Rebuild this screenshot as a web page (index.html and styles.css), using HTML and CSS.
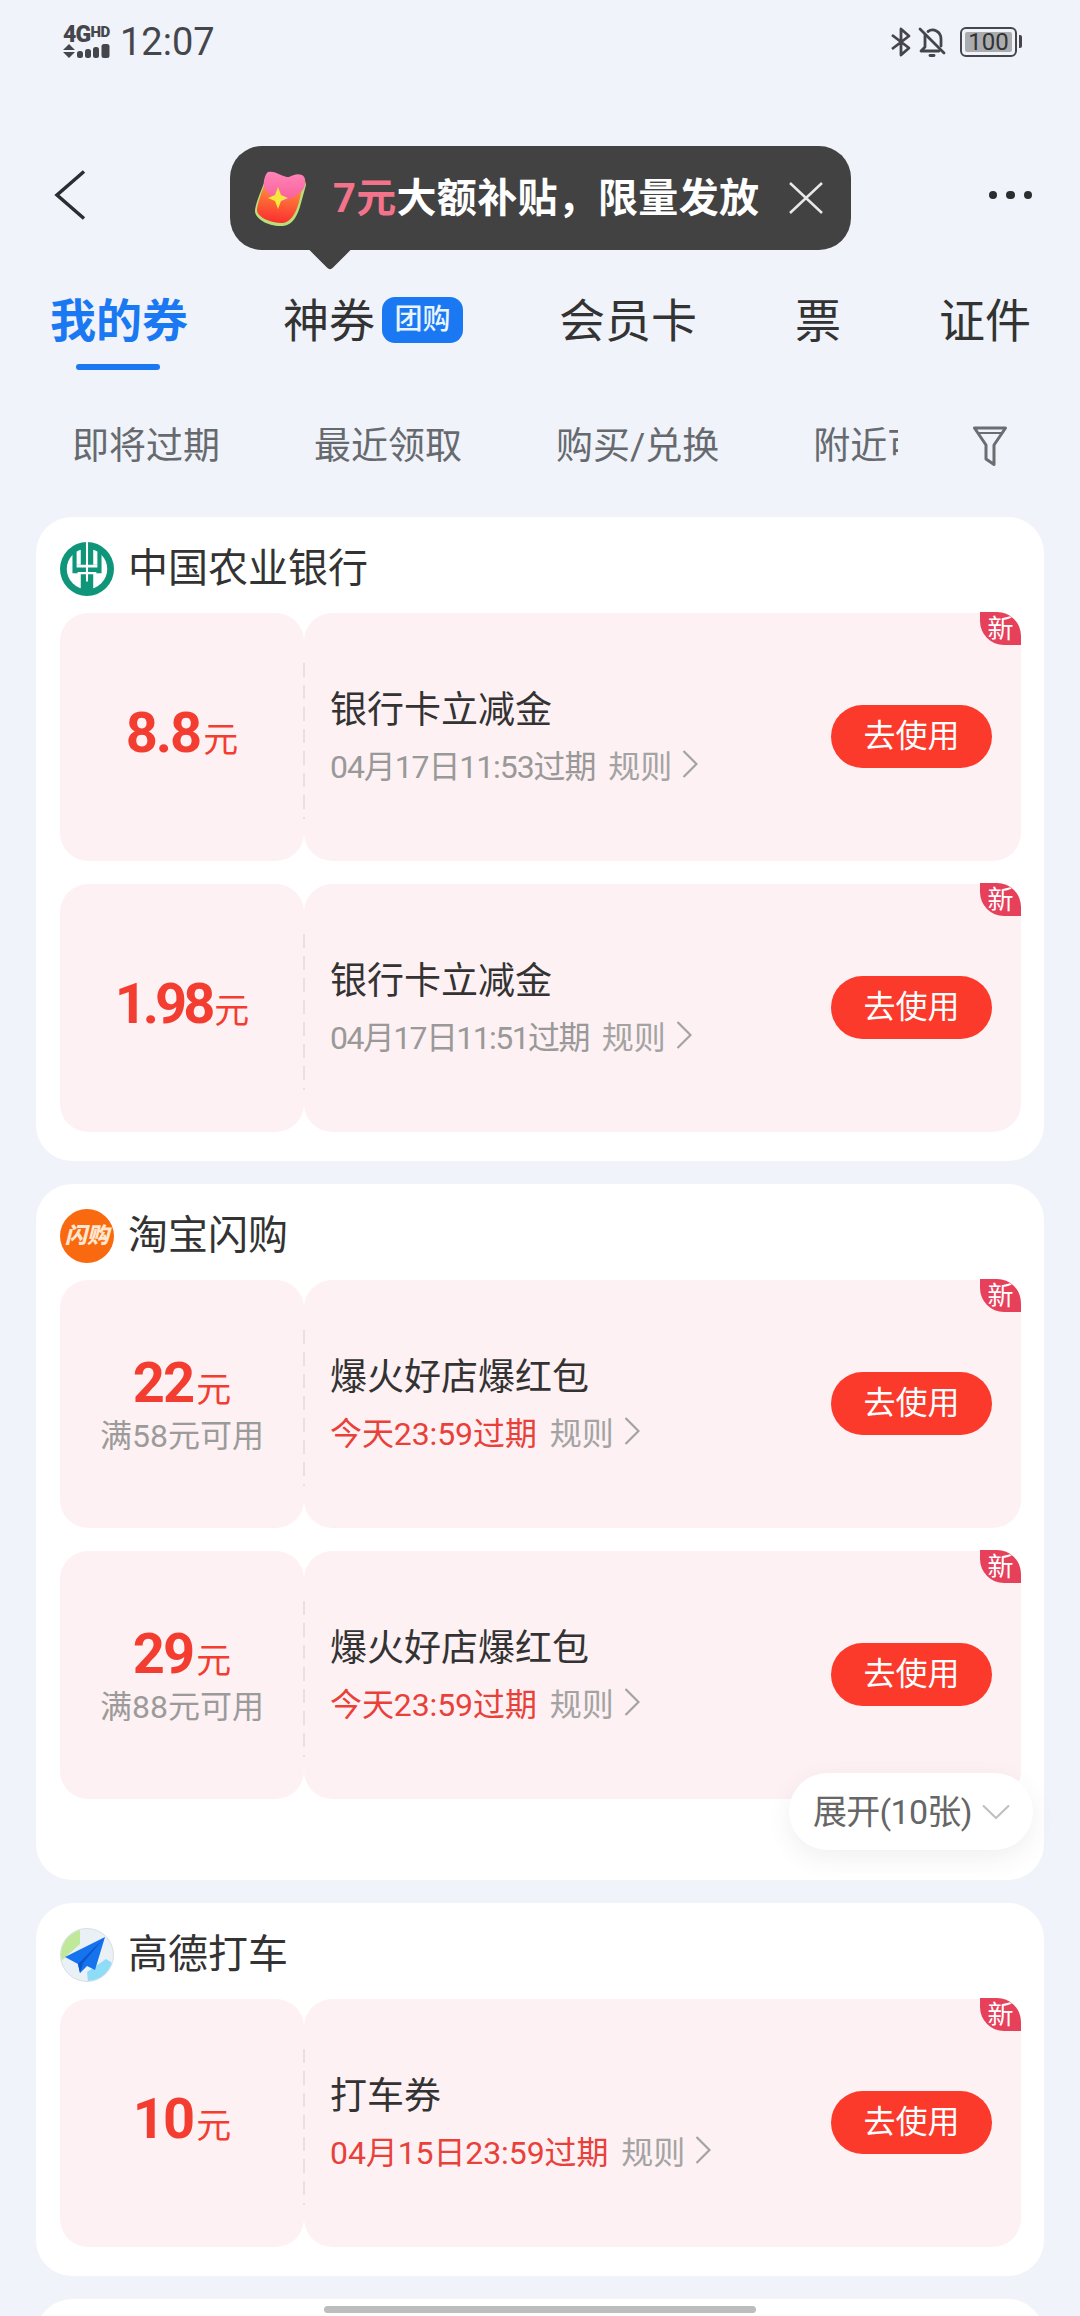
FILE: index.html
```html
<!DOCTYPE html>
<html lang="zh-CN">
<head>
<meta charset="utf-8">
<title>我的券</title>
<link rel="stylesheet" href="styles.css">
</head>
<body>
<div class="screen">
  <header class="statusbar">
    <div class="status-left">
      <div class="network">
        <div class="network-type"><span class="net-g">4G</span><span class="net-hd">HD</span></div>
        <svg class="signal" width="47" height="14" viewBox="0 0 47 14">
          <path d="M0 6 L6 0 L12 6Z M0 8 L12 8 L6 14Z" fill="#44464c"/>
          <rect x="14" y="7" width="6" height="7" rx="2.500" fill="#44464c"/>
          <rect x="22" y="5" width="6" height="9" rx="2.500" fill="#44464c"/>
          <rect x="30" y="3" width="6" height="11" rx="2.500" fill="#44464c"/>
          <rect x="38.500" y="0" width="8" height="14" rx="2.500" fill="#44464c"/>
        </svg>
      </div>
      <span class="clock">12:07</span>
    </div>
    <div class="status-right">
      <svg width="20" height="30" viewBox="0 0 20 30" fill="none" stroke="#44464c" stroke-width="2.800" stroke-linejoin="round">
        <path d="M1 8 L18 21 L10 28 V2 L18 9 L1 22"/>
      </svg>
      <svg width="28" height="30" viewBox="0 0 28 30" fill="none" stroke="#44464c" stroke-width="2.800" stroke-linecap="round" stroke-linejoin="round">
        <path d="M2 2 L26 26"/>
        <path d="M7 8 V20 L3 24 H21"/>
        <path d="M10 4.500 C15 1 23 4 23 12 V19"/>
        <path d="M12 28.500 H16"/>
      </svg>
      <div class="battery"><span class="battery-level">100</span></div>
    </div>
  </header>

  <nav class="navbar">
    <svg width="32" height="50" viewBox="0 0 32 50" fill="none" stroke="#2b2d31" stroke-width="3.500">
      <path d="M30 1.500 L3 25 L30 48.500"/>
    </svg>
    <div class="more-dots"><i></i><i></i><i></i></div>
  </nav>

  <div class="promo-tip">
    <svg width="52" height="58" viewBox="0 0 52 58">
      <defs>
        <linearGradient id="packetBody" x1="0.500" y1="0" x2="0.400" y2="1">
          <stop offset="0" stop-color="#ffa23c"/>
          <stop offset="1" stop-color="#fb2d30"/>
        </linearGradient>
        <linearGradient id="packetFlap" x1="0.500" y1="0" x2="0.500" y2="1">
          <stop offset="0" stop-color="#ff86b8"/>
          <stop offset="1" stop-color="#f85c98"/>
        </linearGradient>
      </defs>
      <path d="M9 14 C6 22 0 36 0 42 C0 50 14 58 28 57 C38 56 43 46 46 34 L51 16 C51 10 44 8 30 8 C18 8 11 9 9 14Z" fill="#b7e07a"/>
      <path d="M10 14 C7 22 2 36 2 41 C2 48 15 54 28 54 C36 53 41 44 44 33 L48 16 C48 11 40 10 30 10 C20 10 12 10 10 14Z" fill="url(#packetBody)"/>
      <path d="M13 3 C10 5 8 13 9 18 C11 23 19 31 26 33 C34 31 45 26 49 19 C51 14 51 8 47 6 C42 4 38 6 34 8 C27 8 20 1 13 3Z" fill="url(#packetFlap)"/>
      <path d="M23 18 L26 26 L33 29 L26 32 L23 40 L20 32 L13 29 L20 26Z" fill="#f7e63c"/>
    </svg>
    <span class="promo-text"><em>7元</em>大额补贴，限量发放</span>
    <svg class="promo-close" width="34" height="32" viewBox="0 0 34 32" stroke="#e8e8e8" stroke-width="2.500">
      <path d="M1 1 L33 31 M33 1 L1 31"/>
    </svg>
  </div>

  <div class="tabs">
    <div class="tab tab-active">我的券<span class="tab-bar"></span></div>
    <div class="tab tab-label">神券<span class="tab-badge">团购</span></div>
    <div class="tab">会员卡</div>
    <div class="tab">票</div>
    <div class="tab">证件</div>
  </div>

  <div class="filters">
    <div class="filter-list">
      <span class="filter-item">即将过期</span>
      <span class="filter-item">最近领取</span>
      <span class="filter-item">购买/兑换</span>
      <span class="filter-item">附近可用</span>
    </div>
    <svg class="filter-icon" width="34" height="40" viewBox="0 0 34 40" fill="none" stroke="#6a6d72" stroke-width="3" stroke-linejoin="round" stroke-linecap="round">
      <path d="M1.500 2 H32.500 L21 19 V38.500 L13 33 V19Z"/>
      <path d="M6 7 H28" stroke-width="2"/>
    </svg>
  </div>

  <main class="wallet">
    <section class="group">
      <div class="group-head">
        <svg class="group-logo" viewBox="0 0 52 52">
          <circle cx="26" cy="26" r="26" fill="#0f9579"/>
          <circle cx="26" cy="26" r="19.500" fill="#fff"/>
          <path d="M20 2 H32 V50 H20Z" fill="#0f9579"/>
          <path d="M25 0 H27 V17 H25Z" fill="#fff"/>
          <path d="M12 9 H16 V22 H36 V9 H40 V30 H12Z" fill="#0f9579"/>
          <path d="M16 22 H36 V24.500 H16Z M25 16 H27 V38 H25Z M17 29 H35 V31 H17Z" fill="#fff"/>
        </svg>
        <h2 class="group-name">中国农业银行</h2>
      </div>
      <div class="coupons">
        <article class="coupon">
          <div class="coupon-value"><div class="amount"><b>8.8</b><span>元</span></div></div>
          <div class="coupon-body">
            <div class="coupon-info">
              <div class="coupon-title">银行卡立减金</div>
              <div class="coupon-meta"><span class="expiry">04月17日11:53过期</span><span class="rules">规则</span>
                <svg class="rules-arrow" width="16" height="28" viewBox="0 0 16 28" fill="none" stroke="#a3a3a3" stroke-width="2.200"><path d="M1.500 1 L14.500 14 L1.500 27"/></svg>
              </div>
            </div>
            <button class="use-btn">去使用</button>
            <span class="new-tag">新</span>
          </div>
        </article>
        <article class="coupon">
          <div class="coupon-value"><div class="amount amount-tight"><b>1.98</b><span>元</span></div></div>
          <div class="coupon-body">
            <div class="coupon-info">
              <div class="coupon-title">银行卡立减金</div>
              <div class="coupon-meta"><span class="expiry expiry-narrow">04月17日11:51过期</span><span class="rules">规则</span>
                <svg class="rules-arrow" width="16" height="28" viewBox="0 0 16 28" fill="none" stroke="#a3a3a3" stroke-width="2.200"><path d="M1.500 1 L14.500 14 L1.500 27"/></svg>
              </div>
            </div>
            <button class="use-btn">去使用</button>
            <span class="new-tag">新</span>
          </div>
        </article>
      </div>
    </section>

    <section class="group group-collapsed">
      <div class="group-head">
        <div class="group-logo flash-logo">闪购</div>
        <h2 class="group-name">淘宝闪购</h2>
      </div>
      <div class="coupons">
        <article class="coupon">
          <div class="coupon-value coupon-value-min"><div class="amount"><b>22</b><span>元</span></div><div class="threshold">满58元可用</div></div>
          <div class="coupon-body">
            <div class="coupon-info">
              <div class="coupon-title">爆火好店爆红包</div>
              <div class="coupon-meta"><span class="expiry expiry-soon">今天23:59过期</span><span class="rules">规则</span>
                <svg class="rules-arrow" width="16" height="28" viewBox="0 0 16 28" fill="none" stroke="#a3a3a3" stroke-width="2.200"><path d="M1.500 1 L14.500 14 L1.500 27"/></svg>
              </div>
            </div>
            <button class="use-btn">去使用</button>
            <span class="new-tag">新</span>
          </div>
        </article>
        <article class="coupon">
          <div class="coupon-value coupon-value-min"><div class="amount"><b>29</b><span>元</span></div><div class="threshold">满88元可用</div></div>
          <div class="coupon-body">
            <div class="coupon-info">
              <div class="coupon-title">爆火好店爆红包</div>
              <div class="coupon-meta"><span class="expiry expiry-soon">今天23:59过期</span><span class="rules">规则</span>
                <svg class="rules-arrow" width="16" height="28" viewBox="0 0 16 28" fill="none" stroke="#a3a3a3" stroke-width="2.200"><path d="M1.500 1 L14.500 14 L1.500 27"/></svg>
              </div>
            </div>
            <button class="use-btn">去使用</button>
            <span class="new-tag">新</span>
          </div>
        </article>
      </div>
      <div class="expand-pill"><span class="expand-label">展开(10张)</span>
        <svg width="28" height="16" viewBox="0 0 28 16" fill="none" stroke="#c0c0c0" stroke-width="2.200"><path d="M1 1.500 L14 14 L27 1.500"/></svg>
      </div>
    </section>

    <section class="group">
      <div class="group-head">
        <svg class="group-logo" viewBox="0 0 54 54">
          <defs><clipPath id="mapDisc"><circle cx="27" cy="27" r="26"/></clipPath></defs>
          <circle cx="27" cy="27" r="26.500" fill="#e9f0f6" stroke="#d7dfe4"/>
          <g clip-path="url(#mapDisc)">
            <path d="M0 0 H20 V16 L0 34Z" fill="#bfe89a"/>
            <path d="M27 44 L46 31 L54 36 V54 H28Z" fill="#8fdcf7"/>
          </g>
          <path d="M45 9 L5 29 L18 36 L20 45 L27 38 L35 42Z" fill="#1573ee"/>
          <path d="M45 9 L18 36 L20 45 L23 35Z" fill="#0b55cf"/>
        </svg>
        <h2 class="group-name">高德打车</h2>
      </div>
      <div class="coupons">
        <article class="coupon">
          <div class="coupon-value"><div class="amount"><b>10</b><span>元</span></div></div>
          <div class="coupon-body">
            <div class="coupon-info">
              <div class="coupon-title">打车券</div>
              <div class="coupon-meta"><span class="expiry expiry-soon">04月15日23:59过期</span><span class="rules">规则</span>
                <svg class="rules-arrow" width="16" height="28" viewBox="0 0 16 28" fill="none" stroke="#a3a3a3" stroke-width="2.200"><path d="M1.500 1 L14.500 14 L1.500 27"/></svg>
              </div>
            </div>
            <button class="use-btn">去使用</button>
            <span class="new-tag">新</span>
          </div>
        </article>
      </div>
    </section>

    <section class="group group-next"></section>
  </main>

  <div class="home-indicator"></div>
</div>
</body>
</html>
```

FILE: styles.css
```css
* {
  box-sizing: border-box;
}

html,
body {
  margin: 0;
  padding: 0;
}

body {
  background: #f0f3f9;
  font-family: Roboto, "Noto Sans CJK SC", sans-serif;
  color: #333;
}

.screen {
  position: relative;
  width: 1080px;
  height: 2316px;
  overflow: hidden;
  background: #f0f3f9;
}

/* Status bar */
.statusbar {
  height: 84px;
  padding: 25px 63px 0 63px;
  display: flex;
  justify-content: space-between;
  align-items: flex-start;
  color: #44464c;
}

.status-left {
  display: flex;
  align-items: center;
  gap: 9px;
}

.network {
  width: 48px;
  height: 32px;
  display: flex;
  flex-direction: column;
  justify-content: space-between;
}

.network-type {
  display: flex;
  align-items: flex-start;
  height: 17px;
  line-height: 17px;
  font-weight: 900;
  white-space: nowrap;
}

.net-g {
  font-size: 23px;
  letter-spacing: -0.800px;
}

.net-hd {
  font-size: 15px;
  line-height: 12px;
  letter-spacing: -0.500px;
}

.clock {
  font-size: 38px;
  line-height: 34px;
}

.status-right {
  display: flex;
  align-items: center;
  gap: 7px;
  padding-top: 2px;
}

.battery {
  position: relative;
  width: 57px;
  height: 30px;
  margin-left: 7px;
  padding: 3px;
  border: 2.500px solid #44464c;
  border-radius: 6px;
}

.battery::after {
  content: "";
  position: absolute;
  top: 6px;
  right: -7px;
  width: 3px;
  height: 13px;
  background: #44464c;
  border-radius: 0 2px 2px 0;
}

.battery-level {
  display: block;
  height: 100%;
  background: #aaacb0;
  border-radius: 2px;
  font-size: 24px;
  line-height: 20px;
  text-align: center;
  color: #333;
}

/* Navigation */
.navbar {
  height: 90px;
  margin-top: 66px;
  padding: 0 48px 0 54px;
  display: flex;
  align-items: center;
  justify-content: space-between;
}

.more-dots {
  display: flex;
  gap: 9px;
}

.more-dots i {
  width: 8.500px;
  height: 8.500px;
  border-radius: 50%;
  background: #2b2d31;
}

.promo-tip {
  position: absolute;
  top: 146px;
  left: 230px;
  width: 621px;
  height: 104px;
  padding: 0 28px 0 25px;
  display: flex;
  align-items: center;
  background: #424242;
  border-radius: 32px;
}

.promo-tip::after {
  content: "";
  position: absolute;
  left: 84px;
  bottom: -14px;
  width: 32px;
  height: 32px;
  background: #424242;
  border-radius: 4px;
  transform: rotate(45deg);
  z-index: 0;
}

.promo-text {
  margin-left: 26px;
  padding-top: 2px;
  font-size: 40px;
  font-weight: 700;
  letter-spacing: 0.300px;
  line-height: 56px;
  color: #fff;
  white-space: nowrap;
  position: relative;
  z-index: 1;
}

.promo-text em {
  font-style: normal;
  color: #f2738a;
}

.promo-close {
  margin-left: auto;
}

/* Tabs */
.tabs {
  margin-top: 38px;
  height: 92px;
  padding-left: 50px;
  display: flex;
  align-items: flex-start;
  gap: 98px;
}

.tab {
  position: relative;
  height: 82px;
  line-height: 86px;
  font-size: 46px;
  color: #333;
  white-space: nowrap;
}

.tab-active {
  font-weight: 700;
  color: #1a79f2;
}

.tab-bar {
  position: absolute;
  left: 26px;
  top: 86px;
  width: 84px;
  height: 6px;
  border-radius: 3px;
  background: #1a79f2;
}

.tab-label {
  display: flex;
  align-items: flex-start;
  gap: 7px;
  margin: 0 -2px 0 -3px;
}

.tab-badge {
  width: 81px;
  height: 46px;
  margin-top: 19px;
  border-radius: 13px;
  background: #1a79f2;
  font-size: 28px;
  font-weight: 500;
  line-height: 46px;
  text-align: center;
  color: #eaf4ff;
}

/* Sort filters */
.filters {
  margin-top: 30px;
  height: 90px;
  padding: 0 73px 0 72px;
  display: flex;
  align-items: center;
  justify-content: space-between;
}

.filter-list {
  width: 826px;
  padding-top: 3px;
  display: flex;
  gap: 94px;
  overflow: hidden;
}

.filter-item {
  flex: none;
  font-size: 37px;
  line-height: 50px;
  color: #666a6f;
  white-space: nowrap;
}

.filter-icon {
  flex: none;
  margin-top: 2px;
}

/* Coupon groups */
.wallet {
  margin: 27px 36px 0;
  display: flex;
  flex-direction: column;
  gap: 23px;
}

.group {
  position: relative;
  padding: 0 23px 29px 24px;
  background: #fff;
  border-radius: 36px;
}

.group-collapsed {
  padding-bottom: 81px;
}

.group-next {
  height: 80px;
  flex: none;
}

.group-head {
  height: 96px;
  display: flex;
  align-items: center;
  gap: 14px;
  padding-top: 7px;
}

.group-logo {
  flex: none;
  width: 54px;
  height: 54px;
}

.flash-logo {
  border-radius: 50%;
  background: #f9690f;
  font-size: 22px;
  font-weight: 900;
  font-style: italic;
  line-height: 54px;
  text-align: center;
  color: #ffe6cf;
  white-space: nowrap;
}

.group-name {
  margin: 0;
  font-size: 40px;
  font-weight: 400;
  line-height: 56px;
  color: #333;
}

.coupons {
  display: flex;
  flex-direction: column;
  gap: 23px;
}

.coupon {
  height: 248px;
  display: flex;
}

.coupon-value {
  width: 244px;
  flex: none;
  display: flex;
  flex-direction: column;
  align-items: center;
  justify-content: center;
  padding-bottom: 8px;
  background: #fef1f3;
  border-radius: 28px;
}

.coupon-value-min {
  padding-top: 2px;
  padding-bottom: 0;
}

.amount {
  height: 62px;
  display: flex;
  align-items: baseline;
  justify-content: center;
  color: #f33d30;
  line-height: 62px;
}

.amount b {
  font-size: 56px;
  font-weight: 700;
  letter-spacing: -2px;
}

.amount-tight b {
  letter-spacing: -4px;
}

.amount span {
  margin-left: 3px;
  font-size: 35px;
  font-weight: 400;
}

.threshold {
  font-size: 32px;
  line-height: 44px;
  color: #9b9b9b;
}

.coupon-body {
  position: relative;
  flex: 1;
  display: flex;
  align-items: center;
  justify-content: space-between;
  padding: 0 29px 0 26px;
  background: #fef1f3;
  border-radius: 28px;
}

/* Perforation between the value stub and the coupon body */
.coupon-body::before {
  content: "";
  position: absolute;
  left: -1px;
  top: 50px;
  bottom: 42px;
  width: 2px;
  background: repeating-linear-gradient(to bottom, #eadfe1 0 14px, transparent 14px 22px);
}

.coupon-info {
  display: flex;
  flex-direction: column;
  gap: 3px;
}

.coupon-title {
  font-size: 37px;
  line-height: 50px;
  color: #333;
}

.coupon-meta {
  height: 50px;
  display: flex;
  align-items: center;
  font-size: 32px;
  color: #999;
}

.expiry {
  letter-spacing: -1.100px;
}

.expiry-narrow {
  letter-spacing: -1.600px;
}

.expiry-soon {
  letter-spacing: -0.100px;
  color: #e9403a;
}

.rules {
  margin-left: 13px;
  margin-right: 10px;
  color: #a3a3a3;
}

.use-btn {
  width: 161px;
  height: 63px;
  margin-bottom: 1px;
  padding: 0;
  border: 0;
  border-radius: 32px;
  background: #fc3a2c;
  color: #fff;
  font: inherit;
  font-size: 32px;
  line-height: 63px;
}

.new-tag {
  position: absolute;
  top: -1px;
  right: 0;
  width: 41px;
  height: 33px;
  background: #e6405a;
  border-radius: 0 24px 0 24px;
  font-size: 26px;
  line-height: 35px;
  text-align: center;
  color: #fff;
}

.expand-pill {
  position: absolute;
  right: 11px;
  bottom: 30px;
  width: 244px;
  height: 77px;
  padding-left: 24px;
  display: flex;
  align-items: center;
  gap: 10px;
  background: #fff;
  border-radius: 39px;
  box-shadow: 0 8px 24px rgba(60, 60, 70, 0.08);
  font-size: 34px;
  letter-spacing: -0.700px;
  color: #666;
  white-space: nowrap;
}

.expand-label {
  padding-bottom: 4px;
}

.home-indicator {
  position: absolute;
  left: 324px;
  bottom: 3px;
  width: 432px;
  height: 7px;
  border-radius: 4px;
  background: #bdbdbd;
}
```
